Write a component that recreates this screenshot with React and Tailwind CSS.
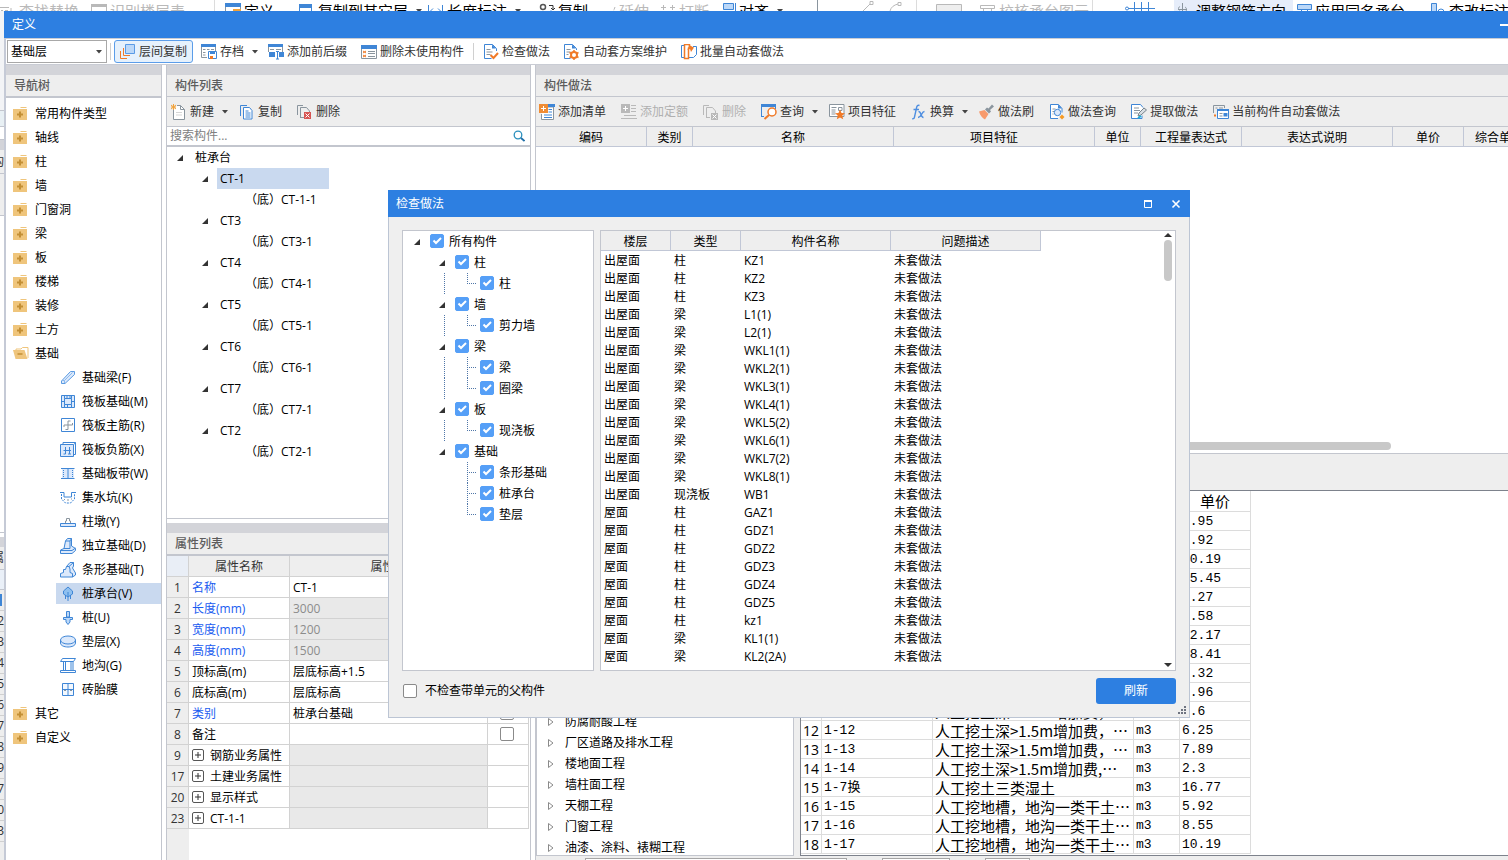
import React, { useState } from "react";

/* ---------- icons ---------- */
const B = "#3f86d6";
const L = "#bcd8f8";
const G = "#8a959e";
const O = "#f07a28";
const D = "#b9b9b9";

const Svg = ({ children, className = "" }) => (
  <svg
    viewBox="0 0 16 16"
    fill="none"
    aria-hidden="true"
    className={`w-4 h-4 shrink-0 ${className}`}
  >
    {children}
  </svg>
);

const Caret = ({ className = "" }) => (
  <svg viewBox="0 0 7 4" aria-hidden="true" className={`w-[7px] h-[4px] shrink-0 overflow-visible ${className}`}>
    <path d="M5 0h6l-3 3.5z" fill="#444" />
  </svg>
);

const TreeArrow = () => (
  <svg viewBox="0 0 6 6" aria-hidden="true" className="w-[6px] h-[6px] shrink-0">
    <path d="M6 0v6H0z" fill="#333" />
  </svg>
);

const icons = {
  folder: (
    <>
      <path d="M7 2l1-1h5l1 1z" fill="#efc57c" />
      <path d="M0 3h14v11H0z" fill="#efc57c" />
      <path d="M6 5.500h2v2h2v2H8v2H6v-2H4v-2h2z" fill="#c38f35" />
    </>
  ),
  folderOpen: (
    <>
      <path d="M3 4.500V3h5l1.500-1.500H15V12" stroke="#efc57c" />
      <path d="M0 4h11.500l3 9H2.500z" fill="#efc57c" />
      <path d="M4.500 8h5" stroke="#c38f35" strokeWidth="1.500" />
    </>
  ),
  layerCopy: (
    <>
      <path d="M5.500.5h9v9h-9z" fill={L} stroke="#5a9be6" />
      <path d="M3.500 4v7.500H10M.5 7v7.500H7" stroke={O} />
    </>
  ),
  archive: (
    <>
      <path d="M.5.5h14v7" stroke={G} />
      <path d="M0 0h15v3H0z" fill={B} />
      <path d="M.5 3v10.500H6M2 5.500h2.500M6 5.500h2.500M10 5.500h3M2 8.500h2.500M2 11h2.500" stroke={G} />
      <path d="M7.500 7.500h8v7h-8z" fill="#fff" stroke={B} />
      <path d="M9 7h5v3H9z" fill={B} />
      <path d="M9 12h3v3H9z" fill={O} />
    </>
  ),
  suffix: (
    <>
      <path d="M.5 8V.5h14V8" stroke={G} />
      <path d="M0 0h15v3H0z" fill={B} />
      <path d="M2 5.500h4M8 5.500h5" stroke={G} />
      <path d="M1 8h6v5H1zM11 8h5v5h-5z" fill={B} />
      <path d="M9.500 7v8M8 7.500h3M8 15h3" stroke={B} />
    </>
  ),
  removeUnused: (
    <>
      <path d="M.5 1.500h15v13H.5z" fill="#fff" stroke={G} />
      <path d="M0 1h16v4H0z" fill={B} />
      <path d="M7 7.500h7M7 9.500h7M7 12.500h7" stroke={G} />
      <path d="M2 7l3 2M5 7l-3 2M2 11l3 2M5 11l-3 2" stroke={O} />
    </>
  ),
  check: (
    <>
      <path d="M8.500 14.500h-7V.5h8l4 4V7" fill="#fff" stroke={B} />
      <path d="M9 .5v4h4z" fill={B} />
      <path d="M3.500 5.500h4M3.500 8h6M3.500 10.500h4" stroke={G} />
      <path d="M7.500 11l3 3 4.500-5" stroke={O} strokeWidth="2" />
    </>
  ),
  scheme: (
    <>
      <path d="M6.500 14.500h-6V.5h8l4 4V6" fill="#fff" stroke={B} />
      <path d="M8 .5v4h4z" fill={B} />
      <path d="M2.500 5.500h4M2.500 8h4M2.500 10.500h2" stroke={G} />
      <circle cx="10" cy="11" r="3" stroke={O} strokeWidth="2" />
      <path d="M10 6v2M10 14v2M5.500 8.500l2 1M12.500 12.500l2 1M14.500 8.500l-2 1M7.500 12.500l-2 1" stroke={O} strokeWidth="1.500" />
    </>
  ),
  batch: (
    <>
      <path d="M3 1.500H.5v12H3M12 2.500h3.500v8l-3 3H8" stroke={B} />
      <path d="M8.500 2V.5h-5v14h4v-11" stroke={O} strokeWidth="1.500" />
      <path d="M8 1l5 2.500L10 8 9 5 6.500 6z" fill={O} />
    </>
  ),
  create: (
    <>
      <path d="M2.500 6v9.500h11v-10l-4-4H6" fill="#fff" stroke={G} />
      <path d="M9.500 1.500v4h4" stroke={G} />
      <path d="M5 8.500h6M5 11h6" stroke="#d5d5d5" />
      <path d="M0 1l5 4M5 1L0 5M2.500 0v6M0 3h5" stroke="#f2a23a" />
    </>
  ),
  copy: (
    <>
      <path d="M1.500 12V1.500H8" stroke={B} />
      <path d="M4.500 3.500h6l2.500 3v8.500H4.500z" fill="#fff" stroke={B} />
      <path d="M6.500 7h3M6.500 9h5M6.500 11h5M6.500 13h5" stroke={B} />
    </>
  ),
  remove: (
    <>
      <path d="M.5 11V1.500H6M3.500 14V3.500h6L12.500 7v2M3.500 13.500H7" stroke={G} />
      <path d="M7 8h7v7H7z" fill="#d75452" />
      <path d="M8.500 9.500l4 4M12.500 9.500l-4 4" stroke="#fff" />
    </>
  ),
  removeGray: (
    <>
      <path d="M.5 11V1.500H6M3.500 14V3.500h6L12.500 7v2M3.500 13.500H7" stroke={D} />
      <path d="M8 9h7v7H8z" fill={D} />
      <path d="M9.500 10.500l4 4M13.500 10.500l-4 4" stroke="#fff" />
    </>
  ),
  addList: (
    <>
      <path d="M9 3h5.500v12.500h-12V10" fill="#fff" stroke={G} />
      <path d="M9 0h7v3H9z" fill={B} />
      <path d="M9.500 5.500H13M9.500 8H13M5 11h8M5 13.500h8" stroke={B} />
      <path d="M0 0h9v9H0z" fill="#f08c34" />
      <path d="M4.500 2v5M2 4.500h5" stroke="#fff" />
    </>
  ),
  addQuota: (
    <>
      <path d="M0 0h9v9H0z" fill={D} />
      <path d="M4.500 2v5M2 4.500h5" stroke="#fff" />
      <path d="M10 1.500h5M10 4.500h5M10 7.500h5M3 11.500h12M0 14.500h16" stroke={D} />
    </>
  ),
  query: (
    <>
      <path d="M.5 13V1.500h14V5M.5 12.500H3" stroke={B} />
      <path d="M0 0h15v3H0z" fill={B} />
      <circle cx="11" cy="8" r="4" fill="#fff" stroke={O} strokeWidth="1.500" />
      <path d="M8 11l-4.500 4" stroke={O} strokeWidth="2" />
    </>
  ),
  feature: (
    <>
      <path d="M.5.5h14.500v12H.5z" fill="#fff" stroke={G} />
      <path d="M2.500 3.500h5M2.500 6h4M2.500 8h4M2.500 10h4M9.500 3.500h3.500v3H9.500z" stroke={G} />
      <path d="M11 5.500L12.500 9l3.500.3-2.700 2.300.9 3.700L11 13.500l-3.200 1.800.9-3.700L6 9.300 9.500 9z" fill={O} />
    </>
  ),
  fx: (
    <path
      d="M8.500 1.500C6.500.7 5.800 2.200 5.500 4l-2 9c-.3 1.500-1 2-2.300 1.600M2.500 5.500H8M7.500 8c2.500-1.500 2 5.500 5 5.500M13.500 7.500c-3 0-3 6-6.500 6"
      stroke="#4f8fe0"
      strokeWidth="1.400"
    />
  ),
  brush: (
    <>
      <path d="M0 7.500l5.500-1.500L9.500 10l-3.500 5.500C3.500 14 1 11.500 0 7.500z" fill="#f79a6c" />
      <path d="M6 5.500l4 4 2-2-1-1.500 4-3.500L13 .5 9.500 4.500 8 3.500z" fill={G} />
    </>
  ),
  methodQuery: (
    <>
      <path d="M9 14.500H1.500V.5h8l3.500 4v4" fill="#fff" stroke={B} />
      <path d="M9 .5v4h4z" fill={B} />
      <path d="M3.500 5h3M3.500 7.500h1.500M3.500 10h1" stroke={G} />
      <circle cx="8.500" cy="8.500" r="3.200" fill="#dce9fb" stroke={B} />
      <path d="M13 10.500l2.500 2.500-2.500 2.500-2.500-2.500z" fill="#f59a23" />
    </>
  ),
  extract: (
    <>
      <path d="M11 11.500v3H.5V.5h9L12 3.500" fill="#fff" stroke={B} />
      <path d="M3 4h5M3 6.500h6M3 9h4" stroke={G} />
      <path d="M7 12l1-3 5-5 2.500 2-5.500 5z" fill="#d8dee3" stroke="#77838c" />
      <path d="M7 14l3-2" stroke="#1fb0d8" strokeWidth="2" />
    </>
  ),
  autoSet: (
    <>
      <path d="M.5 9V1.500h11V4M2.500 4h2M6 4h4" stroke={G} />
      <path d="M1 11.500h2" stroke={O} strokeWidth="2" />
      <path d="M4.500 5.500h11v9h-11z" fill="#fff" stroke={B} />
      <path d="M4 5h12v2H4z" fill={B} />
      <path d="M6.500 9.500h3M6.500 12h3" stroke={G} />
      <path d="M10.500 9h4v3.500h-4z" fill={B} />
    </>
  ),
  beam: (
    <>
      <path d="M1.500 11l9-9.500h4v3L5 13.500H1.500z" fill="#dce9fb" stroke="#5b9be2" />
      <path d="M4.500 13v-2.500H2M4.500 10.500l8-8" stroke="#8ab9ee" />
    </>
  ),
  raft: (
    <>
      <path d="M1.500 1.500h13v12h-13zM4.500 4.500h7v6h-7z" fill="#dce9fb" stroke={B} />
      <path d="M4.500 1.500v3M7 1.500v3M10 1.500v3M11.500 1.500v3M1.500 7.500h3M11.500 7.500h3M4.500 10.500v3M7.500 10.500v3M11.500 13.500v-3" stroke={B} />
    </>
  ),
  rebarMain: (
    <>
      <path d="M1.500.5h13v13h-13z" fill="#fff" stroke={B} />
      <path d="M8 3v8.500M8 3h2.500M8 11.500H5.500M4 9V7h8.500V5" stroke={G} />
    </>
  ),
  rebarNeg: (
    <>
      <path d="M3 2.500V.5h12.500v12H14M14 2.500l1.500-2" stroke={B} />
      <path d="M.5 2.500h13v12H.5z" fill="#dce9fb" stroke={B} />
      <path d="M5.500 5v7M9.500 5v7M3.500 8.500h7.500M3.500 12h2M8 12h3" stroke={B} />
    </>
  ),
  strip: (
    <>
      <path d="M2 2.500h12v10H2z" fill="#dce9fb" />
      <path d="M1 2.500h13.500M1 12.500h13.500M8 2v11" stroke={B} />
      <path d="M3.500 4v8M12.500 4v8" stroke={B} strokeDasharray="1 1" />
    </>
  ),
  pit: (
    <>
      <path d="M0 2.500h4v4.500h7.500V2.500H16" stroke={B} />
      <path d="M1.500 4v5l4 4h5l4-4V4" stroke={B} strokeDasharray="2 1" />
      <path d="M4 9.500h1M7 10h2M11 9h1" stroke={G} />
    </>
  ),
  pier: (
    <>
      <path d="M.5 9.500h15v3H.5z" fill="#dce9fb" stroke={B} />
      <path d="M5.500 9V7h1V4.500h3V7h1v2" stroke={G} />
    </>
  ),
  isolated: (
    <>
      <path d="M.5 12l3.500-1.500L5.500 3l2-2.500h4V8l4 2.500v2l-3.500 3H.5z" fill="#dce9fb" stroke={B} />
      <path d="M.5 12.500h11.500l3.500-2.500M4 10.500h6V3h-4.500M10 3l1.500-2.500" stroke={B} />
    </>
  ),
  stripFound: (
    <>
      <path d="M.5 15v-3.500l3-1V7.500h2l1-3L10 .5h3.500V4l-1 2 3 5v2l-3 2z" fill="#dce9fb" stroke={B} />
      <path d="M12.500 15v-3.500L10 10.500V7L9 4.500H6.500M9 4.500l4.500-4" stroke={B} />
    </>
  ),
  cap: (
    <>
      <path d="M8 1l4.500 4v3L8 11 3.500 8V5z" fill="#8fc0ef" stroke={B} />
      <path d="M8 6v9M5.500 9v4M10.500 9v4" stroke={B} />
    </>
  ),
  pile: (
    <>
      <path d="M6.500 1.500h3V7h-3z" fill={L} stroke={B} />
      <path d="M3.500 7.500h9v2H10v2.500L8 14.500 6 12V9.500H3.500z" fill={L} stroke={B} />
    </>
  ),
  cushion: (
    <>
      <path d="M.5 6v3c0 2.500 3.500 4 7.500 4s7.500-1.500 7.500-4V6" fill="#dce9fb" stroke={B} />
      <ellipse cx="8" cy="6" rx="7.500" ry="4" fill="#dce9fb" stroke={B} />
    </>
  ),
  trench: (
    <>
      <path d="M2.500.5h13l-2 3H.5zM3.500 3.500V12M5.500 3.500V12M11 3.500V12M13 3.500V12M.5 12.500h15v2H.5z" stroke={B} />
    </>
  ),
  brick: (
    <>
      <path d="M2.500 1.500h11v12h-11z" fill="#f3f8fe" stroke={B} />
      <path d="M8 1.500v12M2.500 7.500h11" stroke={B} />
      <path d="M4 8.500h2M10 8.500h2" stroke={G} />
    </>
  ),
  ribbonFind: <path d="M0 4.500h9M1 7.500h2M5 7.500h3M11 5v5h4M13 8l2 2-2 2" stroke={D} />,
  ribbonTable: (
    <>
      <path d="M.5 1.500h15v14H.5z" stroke={D} />
      <path d="M0 1h16v3H0zM6 8h9v8H6z" fill={D} />
    </>
  ),
  ribbonDefine: (
    <>
      <path d="M.5.5h15v15H.5z" fill="#fff" stroke={G} />
      <path d="M0 0h16v4H0z" fill={B} />
      <path d="M8 6h8v10H8z" fill="#f2a23a" />
    </>
  ),
  ribbonCopyTo: (
    <>
      <path d="M.5 1.500h12v12H.5z" fill="#fff" stroke={B} />
      <path d="M0 1h13v4H0z" fill={B} />
      <path d="M8 8h7v8H8z" fill={G} />
    </>
  ),
  ribbonDim: <path d="M.5 2v12M14.500 2v12M2 8.500h11M5 5.500l-3 3 3 3M10 5.500l3 3-3 3" stroke={B} />,
  ribbonCopy: (
    <>
      <circle cx="4" cy="4" r="2.500" stroke="#555" strokeWidth="1.500" />
      <circle cx="12" cy="11" r="3" stroke={B} />
      <path d="M10 2.500h4v4M12 5l2 2 2-2" stroke="#333" />
    </>
  ),
  ribbonExtend: <path d="M0 8.500h9M15 4l-3 8" stroke={D} strokeDasharray="3 1" />,
  ribbonBreak: <path d="M3.500 2v5M1 4.500h5M12.500 2v5M10 4.500h5M2 9h4M10 9h4" stroke={D} />,
  ribbonAlign: (
    <>
      <path d="M3.500.5h10v6h-10z" fill={L} stroke={B} />
      <path d="M15.500 0v14M0 9.500h12" stroke={B} />
    </>
  ),
  ribbonCheck: <path d="M.5 2.500h14v3H.5zM3.500 6v8M11.500 6v8" stroke={D} />,
  ribbonRebar: <path d="M5.500 0v12M1 6.500h9M3 3.500c-2 1-2 3 0 4M8 9c2-1 2-4 0-5" stroke={G} />,
  ribbonApply: (
    <>
      <path d="M1.500 1.500h14v5h-14z" fill={L} stroke={B} />
      <path d="M5.500 7v6M11.500 7v6" stroke={B} />
    </>
  ),
  ribbonEdit: (
    <>
      <path d="M1.500.5h5v11h-5z" fill={L} stroke={B} />
      <circle cx="11" cy="9" r="3" stroke={B} />
    </>
  ),
};

const Icon = ({ name }) => <Svg>{icons[name]}</Svg>;

/* ---------- data ---------- */
const ribbon = [
  { icon: "ribbonFind", text: "查找替换", width: "w-[91px]", off: true },
  { icon: "ribbonTable", text: "识别楼层表", width: "w-[134px]", off: true, line: true },
  { icon: "ribbonDefine", text: "定义", width: "w-[74px]" },
  { icon: "ribbonCopyTo", text: "复制到其它层", width: "w-[129px]", menu: true },
  { icon: "ribbonDim", text: "长度标注", width: "w-[111px]", menu: true },
  { icon: "ribbonCopy", text: "复制", width: "w-[61px]" },
  { icon: "ribbonExtend", text: "延伸", width: "w-[60px]", off: true },
  { icon: "ribbonBreak", text: "打断", width: "w-[60px]", off: true },
  { icon: "ribbonAlign", text: "对齐", width: "w-[72px]", menu: true, line: true },
];

const ribbonRight = [
  { icon: "ribbonCheck", text: "校核承台图元", width: "w-[123px]", off: true, line: true },
];

const ribbonEnd = [
  { icon: "ribbonRebar", text: "调整钢筋方向", width: "w-[119px] pl-[3px] bg-[#e6edfa]" },
  { icon: "ribbonApply", text: "应用同名承台", width: "w-[134px] pl-[3px]" },
  { icon: "ribbonEdit", text: "查改标注", width: "w-[90px] pl-[3px]" },
];

const categories = ["常用构件类型", "轴线", "柱", "墙", "门窗洞", "梁", "板", "楼梯", "装修", "土方"];

const foundations = [
  ["beam", "基础梁(F)"],
  ["raft", "筏板基础(M)"],
  ["rebarMain", "筏板主筋(R)"],
  ["rebarNeg", "筏板负筋(X)"],
  ["strip", "基础板带(W)"],
  ["pit", "集水坑(K)"],
  ["pier", "柱墩(Y)"],
  ["isolated", "独立基础(D)"],
  ["stripFound", "条形基础(T)"],
  ["cap", "桩承台(V)"],
  ["pile", "桩(U)"],
  ["cushion", "垫层(X)"],
  ["trench", "地沟(G)"],
  ["brick", "砖胎膜"],
];

const components = ["CT-1", "CT3", "CT4", "CT5", "CT6", "CT7", "CT2"];

const properties = [
  { no: 1, name: "名称", value: "CT-1", blue: true, noCheck: true },
  { no: 2, name: "长度(mm)", value: "3000", blue: true, locked: true },
  { no: 3, name: "宽度(mm)", value: "1200", blue: true, locked: true },
  { no: 4, name: "高度(mm)", value: "1500", blue: true, locked: true },
  { no: 5, name: "顶标高(m)", value: "层底标高+1.5" },
  { no: 6, name: "底标高(m)", value: "层底标高" },
  { no: 7, name: "类别", value: "桩承台基础", blue: true },
  { no: 8, name: "备注", value: "" },
  { no: 9, name: "钢筋业务属性", group: true },
  { no: 17, name: "土建业务属性", group: true },
  { no: 20, name: "显示样式", group: true },
  { no: 23, name: "CT-1-1", group: true },
];

const methodTools = [
  { icon: "addList", text: "添加清单" },
  { icon: "addQuota", text: "添加定额", off: true },
  { icon: "removeGray", text: "删除", off: true },
  { icon: "query", text: "查询", menu: true },
  { icon: "feature", text: "项目特征" },
  { icon: "fx", text: "换算", menu: true },
  { icon: "brush", text: "做法刷" },
  { icon: "methodQuery", text: "做法查询" },
  { icon: "extract", text: "提取做法" },
  { icon: "autoSet", text: "当前构件自动套做法" },
];

const methodColumns = [
  ["编码", "w-[111px]"],
  ["类别", "w-[46px]"],
  ["名称", "w-[201px]"],
  ["项目特征", "w-[201px]"],
  ["单位", "w-[46px]"],
  ["工程量表达式", "w-[101px]"],
  ["表达式说明", "w-[151px]"],
  ["单价", "w-[71px]"],
  ["综合单价", "w-[71px]"],
];

const chapters = [
  "防腐耐酸工程",
  "厂区道路及排水工程",
  "楼地面工程",
  "墙柱面工程",
  "天棚工程",
  "门窗工程",
  "油漆、涂料、裱糊工程",
];

const quotas = [
  ["1-1", "人工挖土方", "5.95"],
  ["1-2", "人工挖土方", "8.92"],
  ["1-3", "人工挖土方", "10.19"],
  ["1-4", "人工挖土方", "15.45"],
  ["1-5", "人工挖土方", "4.27"],
  ["1-6", "人工挖土方", "7.58"],
  ["1-7", "人工挖土方", "12.17"],
  ["1-8", "人工挖土方", "18.41"],
  ["1-9", "人工挖土方", "2.32"],
  ["1-10", "人工挖土方", "3.96"],
  ["1-11", "人工挖土深>1.5m增加费，…", "4.6"],
  ["1-12", "人工挖土深>1.5m增加费，…", "6.25"],
  ["1-13", "人工挖土深>1.5m增加费，…", "7.89"],
  ["1-14", "人工挖土深>1.5m增加费,…", "2.3"],
  ["1-7换", "人工挖土三类湿土", "16.77"],
  ["1-15", "人工挖地槽，地沟一类干土…", "5.92"],
  ["1-16", "人工挖地槽，地沟一类干土…", "8.55"],
  ["1-17", "人工挖地槽，地沟一类干土…", "10.19"],
];

const checkTree = [
  { text: "柱", items: ["柱"] },
  { text: "墙", items: ["剪力墙"] },
  { text: "梁", items: ["梁", "圈梁"] },
  { text: "板", items: ["现浇板"] },
  { text: "基础", items: ["条形基础", "桩承台", "垫层"] },
];

const problems = [
  ["出屋面", "柱", "KZ1"],
  ["出屋面", "柱", "KZ2"],
  ["出屋面", "柱", "KZ3"],
  ["出屋面", "梁", "L1(1)"],
  ["出屋面", "梁", "L2(1)"],
  ["出屋面", "梁", "WKL1(1)"],
  ["出屋面", "梁", "WKL2(1)"],
  ["出屋面", "梁", "WKL3(1)"],
  ["出屋面", "梁", "WKL4(1)"],
  ["出屋面", "梁", "WKL5(2)"],
  ["出屋面", "梁", "WKL6(1)"],
  ["出屋面", "梁", "WKL7(2)"],
  ["出屋面", "梁", "WKL8(1)"],
  ["出屋面", "现浇板", "WB1"],
  ["屋面", "柱", "GAZ1"],
  ["屋面", "柱", "GDZ1"],
  ["屋面", "柱", "GDZ2"],
  ["屋面", "柱", "GDZ3"],
  ["屋面", "柱", "GDZ4"],
  ["屋面", "柱", "GDZ5"],
  ["屋面", "柱", "kz1"],
  ["屋面", "梁", "KL1(1)"],
  ["屋面", "梁", "KL2(2A)"],
];

/* ---------- small parts ---------- */
function ToolButton({ icon, text, off, menu, className = "" }) {
  return (
    <button
      type="button"
      disabled={off}
      className={`flex items-center gap-[3px] shrink-0 whitespace-nowrap ${
        off ? "text-[#b0b0b0]" : "text-[#333]"
      } ${className}`}
    >
      <Icon name={icon} />
      <span>{text}</span>
      {menu && <Caret />}
    </button>
  );
}

function RibbonItem({ icon, text, width, off, menu, line }) {
  return (
    <button
      type="button"
      className={`flex items-center gap-[3px] h-[22px] shrink-0 whitespace-nowrap text-[15px] ${width} ${
        off ? "text-[#b9b9b9]" : "text-black"
      }`}
    >
      <Icon name={icon} />
      <span>{text}</span>
      {menu && <Caret />}
      {line && <span className="ml-auto mr-[10px] w-px h-full bg-[#dcdcdc]" />}
    </button>
  );
}

function PanelHeader({ title, thick }) {
  return (
    <>
      <div className="h-[10px] shrink-0 bg-[#d3d4d9]" />
      <h2
        className={`shrink-0 bg-[#eeeeee] border-[#c3c6ce] pl-[8px] leading-[21px] text-[#5c5c5c] font-medium ${
          thick ? "border-b-2" : "border-b"
        }`}
      >
        {title}
      </h2>
    </>
  );
}

function CheckBox({ checked, onChange, label }) {
  return (
    <span className="grid shrink-0 w-[14px] h-[14px] mb-px">
      <input
        type="checkbox"
        checked={checked}
        onChange={onChange}
        aria-label={label}
        className="[grid-area:1/1] appearance-none w-[14px] h-[14px] rounded-[2px] border border-[#8a8a8a] bg-white checked:bg-[#559ff7] checked:border-[#559ff7]"
      />
      {checked && (
        <svg viewBox="0 0 14 14" fill="none" aria-hidden="true" className="[grid-area:1/1] w-[14px] h-[14px] pointer-events-none">
          <path d="M3.500 6.500L6 9l5-5" stroke="#fff" strokeWidth="2" />
        </svg>
      )}
    </span>
  );
}

/* Sliver of the main window that stays visible left of the dialog */
function BackgroundEdge() {
  const numbers = ["2", "3", "4", "5", "6", "7", "8", "9", "17", "20", "23"];
  return (
    <div aria-hidden="true" className="w-[4px] shrink-0 overflow-hidden flex flex-col bg-white">
      <div className="h-[100px] shrink-0 bg-[#f3f4f6] border-b border-[#c3c6ce]" />
      <div className="h-[16px] shrink-0 bg-[#e8f0f4] border-b border-[#c3c6ce]" />
      <div className="h-[13px] shrink-0 border-b border-[#c3c6ce]" />
      <div className="h-[10px] shrink-0 bg-[#d3d4d9]" />
      <div className="h-[24px] shrink-0 flex justify-end bg-[#eeeeee] border-b border-[#c3c6ce] leading-[24px] text-[#333]">构</div>
      <div className="h-[42px] shrink-0 bg-[#eeeeee] border-b border-[#c3c6ce]" />
      <div className="flex-1 border-b border-[#c3c6ce]" />
      <div className="h-[10px] shrink-0 mt-[4px] bg-[#d3d4d9]" />
      <div className="h-[22px] shrink-0 flex justify-end bg-[#eeeeee] leading-[22px] text-[#333]">属</div>
      <div className="h-[21px] shrink-0 bg-[#eaf0f8] border-y border-[#c3c6ce]" />
      <ul className="shrink-0 bg-[#eeeeee] pb-[18px]">
        <li className="h-[21px] py-[4px] border-b border-[#d0d0d0]">
          <div className="w-[2px] h-[12px] bg-[#3f86d6]" />
        </li>
        {numbers.map((n) => (
          <li key={n} className="h-[21px] flex justify-end border-b border-[#d0d0d0] leading-[20px] text-[#333]">
            {n}
          </li>
        ))}
      </ul>
    </div>
  );
}

function NavTree() {
  const [active, setActive] = useState("桩承台(V)");
  const row = "flex items-center gap-[6px] h-[21px] mb-[3px] pl-[7px] w-full text-left";

  return (
    <nav className="w-[156px] shrink-0 flex flex-col border-r border-[#c3c6ce]">
      <PanelHeader title="导航树" thick />
      <div className="pt-[5px] text-black">
        {categories.map((c) => (
          <button key={c} type="button" className={row}>
            <Icon name="folder" />
            {c}
          </button>
        ))}
        <button type="button" className={row}>
          <Icon name="folderOpen" />
          基础
        </button>
        <div className="ml-[50px]">
          {foundations.map(([icon, text]) => (
            <button
              key={text}
              type="button"
              onClick={() => setActive(text)}
              className={`flex items-center gap-[6px] h-[21px] mb-[3px] pl-[4px] w-full text-left ${
                active === text ? "bg-[#c9d9ef]" : ""
              }`}
            >
              <Icon name={icon} />
              {text}
            </button>
          ))}
        </div>
        {["其它", "自定义"].map((c) => (
          <button key={c} type="button" className={row}>
            <Icon name="folder" />
            {c}
          </button>
        ))}
      </div>
    </nav>
  );
}

function ComponentList() {
  return (
    <section className="flex-1 min-h-0 flex flex-col border-b border-[#c3c6ce]">
      <PanelHeader title="构件列表" />
      <div className="flex items-center gap-[15px] h-[30px] shrink-0 pl-[4px] bg-[#eeeeee] border-b border-[#c3c6ce]">
        <ToolButton icon="create" text="新建" menu />
        <ToolButton icon="copy" text="复制" />
        <ToolButton icon="remove" text="删除" />
      </div>
      <div className="flex items-center h-[20px] shrink-0 pl-[3px] pr-[5px] border-b-2 border-[#c3c6ce]">
        <input
          type="text"
          aria-label="搜索构件"
          placeholder="搜索构件..."
          className="flex-1 min-w-0 h-[18px] outline-none placeholder:text-[#808080]"
        />
        <svg viewBox="0 0 12 12" fill="none" aria-hidden="true" className="w-[12px] h-[12px]">
          <circle cx="5" cy="5" r="3.800" stroke="#2a8fbd" strokeWidth="1.300" />
          <path d="M8 8l3.500 3" stroke="#1f6fa8" strokeWidth="1.800" />
        </svg>
      </div>
      <ul className="text-black leading-[21px]">
        <li className="flex items-center h-[21px] pl-[10px] gap-[9px]">
          <TreeArrow />
          <span className="pl-[3px]">桩承台</span>
        </li>
        {components.map((c) => (
          <li key={c}>
            <div className="flex items-center h-[21px] pl-[35px] gap-[9px]">
              <TreeArrow />
              <span className={`w-[112px] pl-[3px] ${c === "CT-1" ? "bg-[#c9d9ef]" : ""}`}>{c}</span>
            </div>
            <div className="h-[21px] pl-[78px]">（底）{c}-1</div>
          </li>
        ))}
      </ul>
    </section>
  );
}

function PropertyList() {
  const line = "border-r border-b border-[#d2d2d2]";
  const cell = `h-[21px] p-0 pt-[2px] ${line}`;
  return (
    <section className="shrink-0 mt-[4px] flex flex-col">
      <PanelHeader title="属性列表" thick />
      <div className="pr-px">
        <table className="w-full table-fixed border-separate border-spacing-0 leading-[18px]">
          <thead>
            <tr className="text-[#333]">
              <th className={`w-[22px] bg-[#e9eef6] ${cell}`} aria-label="序号" />
              <th className={`w-[101px] bg-[#eeeeee] font-normal ${cell}`}>属性名称</th>
              <th className={`bg-[#eeeeee] font-normal ${cell}`}>属性值</th>
              <th className={`w-[41px] bg-[#eeeeee] font-normal ${cell}`}>附加</th>
            </tr>
          </thead>
          <tbody>
            {properties.map((p) => (
              <tr key={p.no}>
                <td className={`text-center bg-[#eeeeee] text-[#333] ${cell}`}>{p.no}</td>
                <td className={`${cell} pl-[3px] ${p.blue ? "text-[#1a5cf0]" : "text-black"}`}>
                  {p.group ? (
                    <span className="flex items-center gap-[6px]">
                      <button
                        type="button"
                        aria-label={`展开${p.name}`}
                        className="w-[12px] h-[12px] mb-[2px] border border-[#555] rounded-[2px] grid place-items-center"
                      >
                        <svg viewBox="0 0 6 6" aria-hidden="true" className="w-[6px] h-[6px]">
                          <path d="M3 0v6M0 3h6" stroke="#333" />
                        </svg>
                      </button>
                      {p.name}
                    </span>
                  ) : (
                    p.name
                  )}
                </td>
                <td
                  className={`${cell} pl-[3px] ${
                    p.locked || p.group ? "bg-[#e9e9e9] text-[#8c8c8c]" : "text-black"
                  }`}
                >
                  {p.value}
                </td>
                <td className={`h-[21px] p-0 ${line}`}>
                  {!p.group && !p.noCheck && (
                    <span className="flex justify-center pr-[3px]">
                      <CheckBox checked={false} onChange={() => {}} label={`附加${p.name}`} />
                    </span>
                  )}
                </td>
              </tr>
            ))}
            <tr>
              <td className="h-[31px] p-0 bg-[#eeeeee]" />
              <td colSpan={3} className="p-0" />
            </tr>
          </tbody>
        </table>
      </div>
    </section>
  );
}

function MethodPanel() {
  const cell = "h-[19px] p-0 pt-[2px] pl-[2px] border-r border-b border-[#dcdcdc] whitespace-nowrap";
  const head = "h-[21px] p-0 font-normal border-r border-b border-[#dcdcdc]";
  const mono = "font-['Liberation_Mono','Noto_Sans_CJK_SC',monospace] text-[13px]";
  return (
    <section className="flex-1 min-w-0 flex flex-col border-l border-[#c3c6ce]">
      <PanelHeader title="构件做法" />
      <div className="flex items-center gap-[15px] h-[30px] shrink-0 pl-[3px] bg-[#eeeeee] border-b border-[#c3c6ce] overflow-hidden">
        {methodTools.map((t) => (
          <ToolButton key={t.text} {...t} />
        ))}
      </div>
      <div className="shrink-0 overflow-hidden">
        <table className="w-[999px] table-fixed border-separate border-spacing-0 leading-[17px]">
          <thead>
            <tr>
              {methodColumns.map(([title, width]) => (
                <th
                  key={title}
                  className={`${width} h-[20px] p-0 pt-[2px] font-normal text-black bg-[#eeeeee] border-r border-b border-[#c1c7d6]`}
                >
                  {title}
                </th>
              ))}
            </tr>
          </thead>
        </table>
      </div>
      <div className="flex-1 min-h-0 flex flex-col justify-end pb-[3px]">
        <div className="h-[8px] w-[88%] rounded-full bg-[#c8c8c8]" />
      </div>

      <div className="h-[37px] shrink-0 bg-[#eeeeee] border-t border-[#c3c6ce]" />
      <div className="h-[366px] shrink-0 flex gap-[6px] bg-[#eeeeee]">
        <div className="w-[258px] shrink-0 flex flex-col justify-end overflow-hidden bg-white border-l border-r border-b border-[#c3c6ce]">
          <ul className="-mb-[3px] text-black leading-[21px]">
            {chapters.map((c) => (
              <li key={c} className="flex items-center h-[21px] pl-[11px] gap-[11px]">
                <svg viewBox="0 0 6 8" fill="none" aria-hidden="true" className="w-[6px] h-[8px]">
                  <path d="M.5.5v7L5 4z" stroke="#8a8a8a" />
                </svg>
                {c}
              </li>
            ))}
          </ul>
        </div>
        <div className="flex-1 min-w-0 overflow-hidden bg-white border-l border-t border-b border-[#7d828c]">
          <table className="w-[450px] table-fixed border-separate border-spacing-0 text-black leading-[16px]">
            <thead>
              <tr className="text-[15px]">
                <th className={`w-[21px] ${head}`} aria-label="序号" />
                <th className={`w-[111px] ${head}`}>编码</th>
                <th className={`w-[201px] ${head}`}>名称</th>
                <th className={`w-[46px] ${head}`}>单位</th>
                <th className={`w-[71px] ${head}`}>单价</th>
              </tr>
            </thead>
            <tbody>
              {quotas.map(([code, name, price], i) => (
                <tr key={code}>
                  <td className={`${cell} text-[14px]`}>{i + 1}</td>
                  <td className={`${cell} ${mono}`}>{code}</td>
                  <td className={`${cell} font-['Noto_Sans_CJK_SC',sans-serif] text-[15px]`}>{name}</td>
                  <td className={`${cell} ${mono}`}>m3</td>
                  <td className={`${cell} ${mono}`}>{price}</td>
                </tr>
              ))}
            </tbody>
          </table>
        </div>
      </div>
      <div className="h-[4px] shrink-0 flex items-end gap-[35px] pl-[49px] bg-[#eeeeee] overflow-hidden">
        <span className="w-[262px] h-[2px] bg-white border-t border-x border-[#a5a5a5]" />
        <span className="w-[68px] h-[2px] bg-white border-t border-x border-[#a5a5a5]" />
        <span className="w-[45px] h-[2px] bg-white border-t border-x border-[#a5a5a5]" />
      </div>
    </section>
  );
}

function TreeLines({ lastItem, lastGroup }) {
  return (
    <svg viewBox="0 0 36 21" fill="none" aria-hidden="true" className="w-[36px] h-[21px] shrink-0">
      <g stroke="#4f76a8" strokeDasharray="1 1">
        {!lastGroup && <path d="M.5 0v21" />}
        <path d={lastItem ? "M23.500 0v10" : "M23.500 0v21"} />
        <path d="M23 10.500h10" />
      </g>
    </svg>
  );
}

function CheckDialog() {
  const [unchecked, setUnchecked] = useState([]);
  const [skipParent, setSkipParent] = useState(false);

  const toggle = (key) => {
    setUnchecked((prev) => (prev.includes(key) ? prev.filter((k) => k !== key) : [...prev, key]));
  };

  const entry = (key, text) => (
    <label className="flex items-center gap-[5px]">
      <CheckBox checked={!unchecked.includes(key)} onChange={() => toggle(key)} />
      <span>{text}</span>
    </label>
  );

  const th = "h-[20px] p-0 pt-[2px] leading-[17px] font-normal bg-[#eeeeee] border-r border-b border-[#c1c7d6]";
  const td = "h-[18px] p-0 pt-[2px] pl-[3px]";

  return (
    <div
      role="dialog"
      aria-label="检查做法"
      className="absolute left-[388px] top-[190px] w-[802px] bg-[#efefef] text-black"
    >
      <div className="flex items-center h-[27px] pl-[8px] pr-[9px] bg-[#2d7fe1] text-white">
        <span className="flex-1">检查做法</span>
        <button type="button" aria-label="最大化" className="mr-[18px]">
          <svg viewBox="0 0 10 10" fill="none" className="w-[10px] h-[10px]">
            <path d="M1.500 2v6.500h7V2" stroke="#fff" />
            <path d="M1 2h8" stroke="#fff" strokeWidth="2" />
          </svg>
        </button>
        <button type="button" aria-label="关闭">
          <svg viewBox="0 0 10 10" fill="none" className="w-[10px] h-[10px]">
            <path d="M1.500 1.500l7 7M8.500 1.500l-7 7" stroke="#fff" strokeWidth="1.600" />
          </svg>
        </button>
      </div>

      <div className="border-x border-b border-[#bcc5d4] px-[13px] pt-[13px]">
        <div className="flex gap-[6px]">
          <ul className="w-[192px] shrink-0 bg-white border border-[#c3c6ce] leading-[21px]">
            <li className="flex items-center gap-[10px] h-[21px] pl-[11px]">
              <TreeArrow />
              {entry("all", "所有构件")}
            </li>
            {checkTree.map((group, g) => (
              <li key={group.text}>
                <div className="flex items-center gap-[10px] h-[21px] pl-[36px]">
                  <TreeArrow />
                  {entry(group.text, group.text)}
                </div>
                {group.items.map((item, i) => (
                  <div key={item} className="flex items-center h-[21px] pl-[41px]">
                    <TreeLines lastItem={i === group.items.length - 1} lastGroup={g === checkTree.length - 1} />
                    {entry(`${group.text}/${item}`, item)}
                  </div>
                ))}
              </li>
            ))}
          </ul>

          <div className="flex-1 flex items-stretch justify-between bg-white border border-[#c3c6ce]">
            <div className="pb-[5px]">
              <table className="w-[440px] table-fixed border-separate border-spacing-0 leading-[16px]">
                <thead>
                  <tr>
                    <th className={`w-[70px] ${th}`}>楼层</th>
                    <th className={`w-[70px] ${th}`}>类型</th>
                    <th className={`w-[150px] ${th}`}>构件名称</th>
                    <th className={`w-[150px] ${th}`}>问题描述</th>
                  </tr>
                </thead>
                <tbody>
                  {problems.map(([floor, type, name]) => (
                    <tr key={floor + name}>
                      <td className={td}>{floor}</td>
                      <td className={td}>{type}</td>
                      <td className={td}>{name}</td>
                      <td className={td}>未套做法</td>
                    </tr>
                  ))}
                </tbody>
              </table>
            </div>
            <div className="flex flex-col items-center w-[8px] mr-[3px] pt-[2px] pb-[3px]">
              <svg viewBox="0 0 8 4" aria-hidden="true" className="w-[8px] h-[4px]">
                <path d="M0 4l4-4 4 4z" fill="#333" />
              </svg>
              <div className="w-[8px] h-[41px] mt-[3px] rounded-full bg-[#c8c8c8]" />
              <svg viewBox="0 0 8 4" aria-hidden="true" className="w-[8px] h-[4px] mt-auto">
                <path d="M0 0l4 4 4-4z" fill="#333" />
              </svg>
            </div>
          </div>
        </div>

        <div className="flex items-center justify-between pt-[7px]">
          <label className="flex items-center gap-[8px] pl-px">
            <CheckBox checked={skipParent} onChange={(e) => setSkipParent(e.target.checked)} />
            <span>不检查带单元的父构件</span>
          </label>
          <button type="button" className="w-[80px] h-[26px] rounded-[3px] bg-[#2d7fe1] text-white">
            刷新
          </button>
        </div>
        <div className="flex justify-end h-[13px] -mr-[10px] pt-px">
          <svg viewBox="0 0 9 9" aria-hidden="true" className="w-[9px] h-[9px]">
            <path d="M7 1h2v2H7zM4 4h2v2H4zM7 4h2v2H7zM1 7h2v2H1zM4 7h2v2H4zM7 7h2v2H7z" fill="#6f7480" />
          </svg>
        </div>
      </div>
    </div>
  );
}

function App() {
  const [floor, setFloor] = useState("基础层");
  const tool = "h-[23px] px-[5px] border rounded-[3px]";
  const plain = `${tool} border-transparent`;

  return (
    <div className="relative h-screen w-full flex flex-col overflow-hidden bg-white text-[12px] leading-[18px] font-['Open_Sans','Noto_Sans_CJK_SC',sans-serif]">
      {/* Main window ribbon, mostly covered */}
      <div className="h-[11px] shrink-0 flex overflow-hidden">
        {ribbon.map((r) => (
          <RibbonItem key={r.text} {...r} />
        ))}
        <svg viewBox="0 0 188 11" fill="none" aria-hidden="true" className="w-[188px] h-[11px] shrink-0">
          <path d="M25.500 0v11" stroke={G} />
          <path d="M71 11l7-7M78 1.500h3v3h-3zM98 11c1-4 4-6 8-7M106 2.500h3v3h-3z" stroke={D} />
          <path d="M124.500 0v11" stroke="#dcdcdc" />
          <path d="M144.500 4.500h25v8h-25z" fill="#eee" stroke={D} />
        </svg>
        {ribbonRight.map((r) => (
          <RibbonItem key={r.text} {...r} />
        ))}
        <svg viewBox="0 0 71 11" fill="none" aria-hidden="true" className="w-[71px] h-[11px] shrink-0">
          <path d="M25 8.500h27M31.500 2v9M38.500 2v9M45.500 2v9" stroke={B} />
          <circle cx="24" cy="8.500" r="1.500" stroke={B} />
        </svg>
        {ribbonEnd.map((r) => (
          <RibbonItem key={r.text} {...r} />
        ))}
      </div>

      <div className="flex-1 min-h-0 flex">
        <BackgroundEdge />
        <div className="flex-1 min-w-0 flex flex-col">
          <header className="flex items-center justify-between h-[27px] shrink-0 pl-[8px] bg-[#2d7fe1] text-white">
            <h1>定义</h1>
            <button type="button" aria-label="最小化" className="w-[8px] h-[2px] bg-white" />
          </header>

          <div className="flex-1 min-h-0 flex flex-col border-l-2 border-[#c5cad6]">
            {/* Top toolbar */}
            <div className="flex items-center gap-[2px] h-[27px] shrink-0 pl-px border-y border-[#c9ccd4]">
              <div className="relative">
                <select
                  aria-label="楼层"
                  value={floor}
                  onChange={(e) => setFloor(e.target.value)}
                  className="appearance-none block w-[100px] h-[23px] pl-[3px] border border-[#a8a8a8] bg-white text-black"
                >
                  <option>基础层</option>
                  <option>首层</option>
                  <option>屋面</option>
                </select>
                <Caret className="absolute right-[9px] top-[10px] pointer-events-none" />
              </div>
              <span className="w-px h-[17px] mx-px bg-[#d0d0d0]" />
              <ToolButton icon="layerCopy" text="层间复制" className={`${tool} border-[#5b9de9] bg-[#e6f1fc]`} />
              <ToolButton icon="archive" text="存档" menu className={plain} />
              <ToolButton icon="suffix" text="添加前后缀" className={plain} />
              <ToolButton icon="removeUnused" text="删除未使用构件" className={plain} />
              <span className="w-px h-[17px] mx-px bg-[#d0d0d0]" />
              <ToolButton icon="check" text="检查做法" className={plain} />
              <ToolButton icon="scheme" text="自动套方案维护" className={plain} />
              <ToolButton icon="batch" text="批量自动套做法" className={plain} />
            </div>

            <div className="flex-1 min-h-0 flex">
              <NavTree />
              <div className="w-[365px] shrink-0 mx-[4px] flex flex-col border-x border-[#c3c6ce]">
                <ComponentList />
                <PropertyList />
              </div>
              <MethodPanel />
            </div>
          </div>
        </div>
      </div>

      <CheckDialog />
    </div>
  );
}

export default App;
